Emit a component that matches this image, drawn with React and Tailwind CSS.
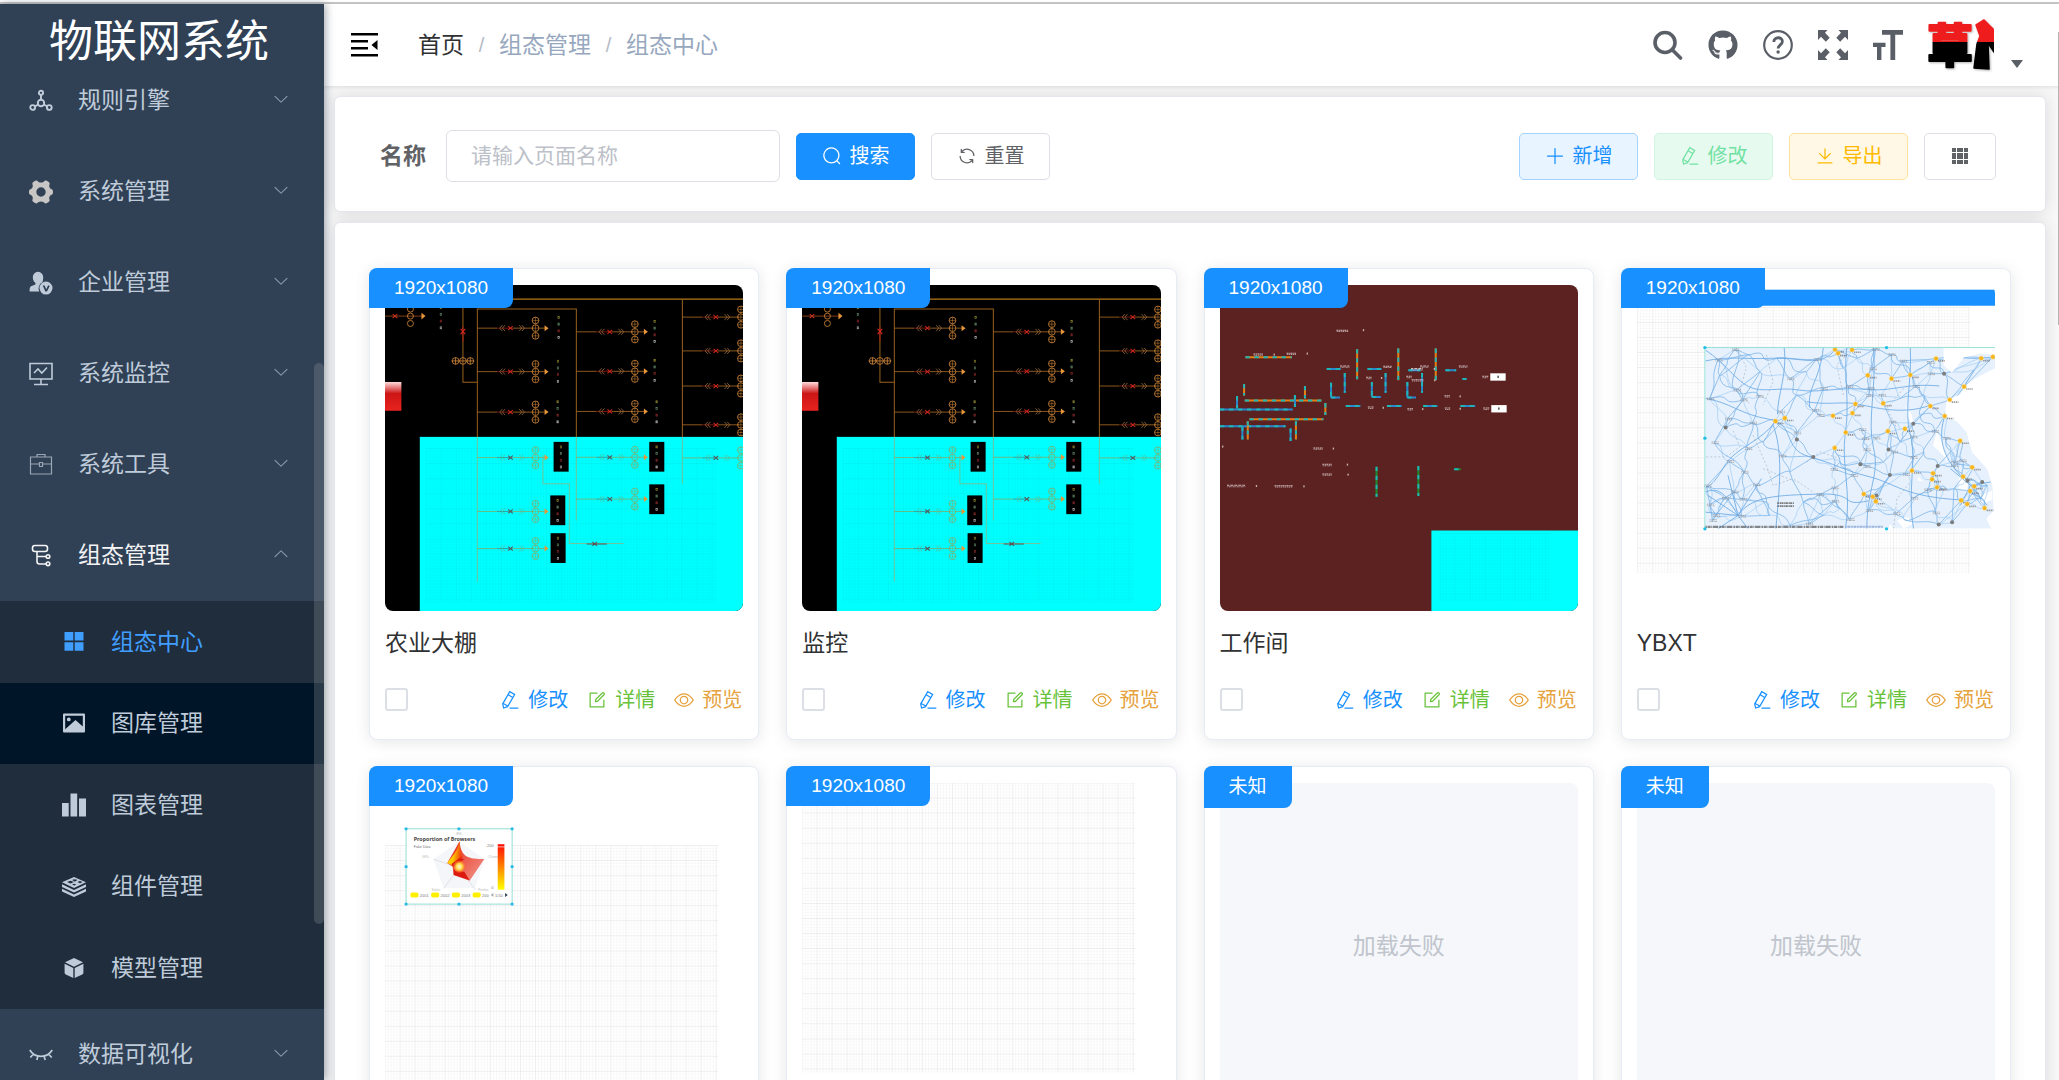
import React from "react";
import { FaGithub } from "react-icons/fa";

/* ---------- outline icons on a 1024 grid ---------- */
const PATHS = {
  search:
    "m795.904 750.72 124.992 124.928a32 32 0 0 1-45.248 45.248L750.656 795.904a416 416 0 1 1 45.248-45.248zM480 832a352 352 0 1 0 0-704 352 352 0 0 0 0 704z",
  plus: "M480 480V128a32 32 0 0 1 64 0v352h352a32 32 0 1 1 0 64H544v352a32 32 0 1 1-64 0V544H128a32 32 0 0 1 0-64h352z",
  download:
    "M160 832h704a32 32 0 1 1 0 64H160a32 32 0 1 1 0-64zm384-253.696 236.288-236.352 45.248 45.248L508.8 704 192 387.2l45.248-45.248L480 584.704V128h64v450.304z",
  refresh:
    "M771.776 794.88A384 384 0 0 1 128 512h64a320 320 0 0 0 555.712 216.448H654.72a32 32 0 1 1 0-64h149.056a32 32 0 0 1 32 32v148.928a32 32 0 1 1-64 0v-50.56zM276.288 295.616h92.992a32 32 0 0 1 0 64H220.16a32 32 0 0 1-32-32V178.56a32 32 0 0 1 64 0v50.56A384 384 0 0 1 896.128 512h-64a320 320 0 0 0-555.776-216.384z",
  view: "M512 160c320 0 512 352 512 352S832 864 512 864 0 512 0 512s192-352 512-352zm0 64c-225.28 0-384.128 208.064-436.8 288 52.608 79.872 211.456 288 436.8 288 225.28 0 384.128-208.064 436.8-288-52.608-79.872-211.456-288-436.8-288zm0 64a224 224 0 1 1 0 448 224 224 0 0 1 0-448zm0 64a160.192 160.192 0 0 0-160 160c0 88.192 71.744 160 160 160s160-71.808 160-160-71.744-160-160-160z",
  edit: "M832 512a32 32 0 1 1 64 0v352a32 32 0 0 1-32 32H160a32 32 0 0 1-32-32V160a32 32 0 0 1 32-32h352a32 32 0 0 1 0 64H192v640h640V512zM469.952 554.24l52.8-7.552L847.104 222.4a32 32 0 1 0-45.248-45.248L477.44 501.44l-7.552 52.8zm422.4-422.4a96 96 0 0 1 0 135.808l-331.84 331.84a32 32 0 0 1-18.112 9.088L436.8 623.68a32 32 0 0 1-36.224-36.224l15.104-105.6a32 32 0 0 1 9.024-18.112l331.904-331.84a96 96 0 0 1 135.744 0z",
  pen: "m199.04 672.64 193.984 112 224-387.968-193.92-112-224 388.032zm-23.872 60.16 32.896 148.288 144.896-45.696L175.168 732.8zM455.04 229.248l193.92 112 56.704-98.112-193.984-112-56.64 98.112zM104.32 708.8l384-665.024 304.768 175.936L409.152 884.8h.064l-248.448 78.336L104.32 708.8zm384 254.272v-64h448v64h-448z",
  down: "M831.872 340.864 512 652.672 192.128 340.864a30.592 30.592 0 0 0-42.752 0 29.12 29.12 0 0 0 0 41.6L489.664 714.24a32 32 0 0 0 44.672 0l340.288-331.712a29.12 29.12 0 0 0 0-41.728 30.592 30.592 0 0 0-42.752 0z",
};

function Icon({ name, className = "size-5" }) {
  return (
    <svg viewBox="0 0 1024 1024" className={`shrink-0 ${className}`} fill="currentColor" fillRule="evenodd" aria-hidden="true">
      <path d={PATHS[name]} />
    </svg>
  );
}

function Svg({ children, className = "size-6", box = "0 0 24 24", ...rest }) {
  return (
    <svg viewBox={box} className={`shrink-0 ${className}`} fill="none" stroke="currentColor" strokeWidth="1.6" aria-hidden="true" {...rest}>
      {children}
    </svg>
  );
}

/* ---------- sidebar icons ---------- */
const NodesIcon = () => (
  <Svg strokeWidth="1.900">
    <circle cx="12" cy="3.800" r="2.100" />
    <circle cx="12" cy="14" r="3.200" />
    <circle cx="3.700" cy="18.500" r="2.400" />
    <circle cx="20.300" cy="18.500" r="2.400" />
    <path d="M12 6v5M9.200 15.500l-3.300 1.800M14.800 15.500l3.300 1.800" />
  </Svg>
);
const GearIcon = () => (
  <Svg className="size-6 text-[#c8c6c4]" fill="currentColor" stroke="none">
    <path
      fillRule="evenodd"
      d="M7.200.6C8.400.4 8.600 1.300 9.600 1.900 11 2.700 13 2.700 14.400 1.900c1-.6 1.200-1.500 2.400-1.300 1.400.3 3 1.300 3.700 2.400.6 1-.3 1.600-.3 2.800 0 1.700 1 3 2.400 3.400 1 .3 1.400 1.400 1.400 2.800s-.4 2.500-1.400 2.800c-1.400.4-2.400 1.700-2.400 3.400 0 1.200.9 1.800.3 2.800-.7 1.100-2.300 2.100-3.700 2.400-1.200.2-1.400-.7-2.400-1.300-1.400-.8-3.400-.8-4.800 0-1 .6-1.200 1.500-2.400 1.300-1.400-.3-3-1.300-3.700-2.400-.6-1 .3-1.600.3-2.800 0-1.700-1-3-2.400-3.400C.4 14.500 0 13.400 0 12s.4-2.500 1.400-2.800c1.400-.4 2.400-1.700 2.400-3.400 0-1.200-.9-1.800-.3-2.800C4.200 1.900 5.800.9 7.200.6zM12 7.300a4.700 4.700 0 1 0 0 9.400 4.700 4.700 0 0 0 0-9.400z"
    />
  </Svg>
);
const UserBadgeIcon = () => (
  <Svg stroke="none" fill="currentColor">
    <path d="M9 .8a5.200 5.200 0 0 0-5.200 5.400c0 2.400 1 4.600 2.600 5.600v1.600L2 15.200C.8 15.800.6 17.400.6 20.400h9.600a7 7 0 0 1 3.200-9.200c.5-1.100.8-3 .8-5A5.200 5.200 0 0 0 9 .8z" />
    <path fillRule="evenodd" d="M17 10.600a6.500 6.500 0 1 0 0 13 6.500 6.500 0 0 0 0-13zm-3.300 3.800h1.900l1.600 3.800 2-4 1.500.7-2.700 5.500h-1.700z" />
  </Svg>
);
const MonitorIcon = () => (
  <Svg>
    <path d="M1 1.500h22V17H1zM12 17v5M5 22.500h14M5 11l4-4 3.800 4L18 5.500" />
  </Svg>
);
const CaseIcon = () => (
  <Svg className="size-6 text-[#9aa6b4]" strokeWidth="1.2">
    <path d="M1.500 4h21v17h-21zM8 4V1.500h8V4M1.500 11h9M13.500 11h9M10.500 9.500h3v4h-3z" />
  </Svg>
);
const TreeIcon = () => (
  <Svg strokeWidth="1.600">
    <rect x="3.500" y="1.500" width="15" height="6" rx="2.400" />
    <path d="M8 7.500v10a2.500 2.500 0 0 0 2.500 2.500h6.800M8 12.500h9.300" />
    <circle cx="19" cy="12.500" r="1.800" />
    <circle cx="19" cy="19.800" r="1.800" />
  </Svg>
);
const FourIcon = () => (
  <Svg stroke="none" fill="currentColor">
    <path d="M2.500 2h8.800v8.500H2.500zM12.700 2h8.800v8.500h-8.800zM2.500 12.200h8.800v8.500H2.500zM12.700 12.200h8.800v8.500h-8.800z" />
  </Svg>
);
const PictureIcon = () => (
  <Svg stroke="none" fill="currentColor">
    <path fillRule="evenodd" d="M1 3.500A1 1 0 0 1 2 2.500h20a1 1 0 0 1 1 1v17a1 1 0 0 1-1 1H2a1 1 0 0 1-1-1zm2.200 1.200v13.600L13.500 9l7.300 6.500V4.700zM6.800 6.500a1.900 1.900 0 1 1 0 3.800 1.900 1.900 0 0 1 0-3.800z" />
  </Svg>
);
const BarsIcon = () => (
  <Svg stroke="none" fill="currentColor">
    <path d="M0 10h6.700v13.500H0zM8.500.5h6.700v23H8.500zM17 5.500h7v18h-7z" />
  </Svg>
);
const LayersIcon = () => (
  <Svg stroke="none" fill="currentColor">
    <path fillRule="evenodd" d="M12 2 24 7.200 12 13 0 7.200zm-1.500 2.200 1 1-1.300.8 2 .1.700.9.700-.9 1.800-.1-1.200-.8.500-1-1.800.4zM5 7l3.500 1.500L12 7 8.500 5.800zm10.500 0 2.500 1.200L20.500 7l-2.500-1zM10 9.500l2.300 1 2-1-2.200-.8z" />
    <path d="M0 9.200 12 15l12-5.800V12l-12 5.600L0 12zM0 13.800l12 5.600 12-5.600v2.700L12 22 0 16.500z" />
  </Svg>
);
const CubeIcon = () => (
  <Svg stroke="none" fill="currentColor">
    <path d="M12 2l9 4.300-9 4.400-9-4.400zM2.600 7.800l8.700 4.300v10L3.800 18.600a2 2 0 0 1-1.200-1.800zM21.400 7.800l-8.700 4.300v10l7.500-3.500a2 2 0 0 0 1.200-1.800z" />
  </Svg>
);
const LashIcon = () => (
  <Svg strokeWidth="1.700">
    <path d="M.8 7c2.500 4.200 6.400 6.300 11.200 6.300S20.700 11.200 23.200 7M4.500 11 1.300 14.500M9 13l-1.200 4M15 13l1.200 4M19.500 11l3.200 3.500" />
  </Svg>
);

const MENU = [
  { label: "规则引擎", icon: NodesIcon },
  { label: "系统管理", icon: GearIcon },
  { label: "企业管理", icon: UserBadgeIcon },
  { label: "系统监控", icon: MonitorIcon },
  { label: "系统工具", icon: CaseIcon },
  {
    label: "组态管理",
    icon: TreeIcon,
    children: [
      { label: "组态中心", icon: FourIcon, style: "text-[#409eff]" },
      { label: "图库管理", icon: PictureIcon, style: "bg-[#001528]" },
      { label: "图表管理", icon: BarsIcon, style: "" },
      { label: "组件管理", icon: LayersIcon, style: "" },
      { label: "模型管理", icon: CubeIcon, style: "" },
    ],
  },
  { label: "数据可视化", icon: LashIcon },
];

function Sidebar() {
  return (
    <aside className="relative z-10 flex w-[324px] shrink-0 flex-col bg-[#304156] text-[#bfcbd9] shadow-[2px_0_8px_rgba(0,21,41,0.35)]">
      <h1 className="z-10 flex h-[72px] shrink-0 items-center justify-center pt-1 pr-1.5 text-[44px] text-white">物联网系统</h1>
      <nav className="-mt-[21px] min-h-0 flex-1 overflow-hidden">
        <ul>
          {MENU.map(({ label, icon: ItemIcon, children }) => (
            <li key={label}>
              <button
                type="button"
                aria-expanded={Boolean(children)}
                className={`flex h-[91px] w-full items-center pr-[34px] pl-[29px] text-[23px] ${children ? "text-[#f4f4f5]" : ""}`}
              >
                <ItemIcon />
                <span className="ml-[25px] flex-1 text-left">{label}</span>
                <Icon name="down" className={`mb-1 size-[18px] text-[#8d9aab] ${children ? "rotate-180" : ""}`} />
              </button>
              {children && (
                <ul className="grid h-[408px] grid-rows-5 bg-[#1f2d3d]">
                  {children.map(({ label: sub, icon: SubIcon, style }) => (
                    <li key={sub} className="flex">
                      <a href="#" className={`flex flex-1 items-center gap-[25px] pl-[62px] text-[23px] ${style}`}>
                        <SubIcon />
                        {sub}
                      </a>
                    </li>
                  ))}
                </ul>
              )}
            </li>
          ))}
        </ul>
      </nav>
      <div className="absolute top-[359px] right-0 h-[561px] w-[10px] rounded-full bg-[#909399]/30" />
    </aside>
  );
}

/* ---------- top bar ---------- */
function Avatar() {
  return (
    <svg viewBox="0 0 66 58" className="h-[58px] w-[66px] shrink-0" aria-label="用户头像" role="img">
      <defs>
        <linearGradient id="ink" gradientUnits="userSpaceOnUse" x1="0" y1="0" x2="0" y2="58">
          <stop offset="0.45" stopColor="#ee1c1c" />
          <stop offset="0.45" stopColor="#000000" />
        </linearGradient>
        <filter id="drop" x="-10%" y="-10%" width="120%" height="130%">
          <feDropShadow dx="1" dy="1" stdDeviation="1" floodOpacity="0.3" />
        </filter>
      </defs>
      <g fill="url(#ink)" stroke="url(#ink)" strokeLinejoin="round" filter="url(#drop)">
        <text x="-1" y="46" fontSize="46" strokeWidth="2" fontFamily='"Noto Sans CJK SC", sans-serif' fontWeight="900">草</text>
        <path strokeWidth="1.500" d="M48 9l8-5 10 10v22l-6-9 1 26-15-1 3-24 3-8z" />
      </g>
    </svg>
  );
}

function TopBar() {
  const crumbs = ["首页", "组态管理", "组态中心"];
  return (
    <header className="relative flex h-[82px] shrink-0 items-center bg-white pr-[35px] pl-[27px] shadow-[0_1px_4px_rgba(0,21,41,0.12)]">
      <button type="button" aria-label="收起菜单" className="text-black">
        <Svg className="size-[27px]" box="0 0 27 27" stroke="none" fill="currentColor">
          <path d="M0 1h27v2.500H0zM0 8h17v2.500H0zM0 15h17v2.500H0zM0 22h27v2.500H0zM26.500 8v10L20.500 13z" />
        </Svg>
      </button>
      <nav aria-label="面包屑" className="ml-10 flex-1">
        <ol className="flex text-[23px] text-[#97a8be]">
          {crumbs.map((c, i) => (
            <li key={c} className="flex">
              {i > 0 && <span className="w-[35px] text-center text-[20px] leading-[34px] text-[#b4bac4]">/</span>}
              <a href="#" className={i === 0 ? "text-[#303133]" : ""}>{c}</a>
            </li>
          ))}
        </ol>
      </nav>
      <div className="flex items-center gap-[25px] text-[#5a5e66]">
        <button type="button" aria-label="搜索菜单">
          <Svg className="size-[30px]" box="0 0 30 30" strokeWidth="3.600" strokeLinecap="round">
            <circle cx="12" cy="12.500" r="10" />
            <path d="M19.500 20l8 8" />
          </Svg>
        </button>
        <a href="#" aria-label="源码地址"><FaGithub className="size-[30px]" /></a>
        <a href="#" aria-label="帮助文档">
          <Svg className="size-[30px]" box="0 0 30 30" strokeWidth="2.200">
            <circle cx="15" cy="15" r="13.800" />
            <path strokeWidth="2.800" d="M10.800 12c0-5.600 8.600-5.600 8.600-.5 0 3.200-4.300 3.600-4.300 7" />
            <circle cx="15.100" cy="22" r="1.700" fill="currentColor" stroke="none" />
          </Svg>
        </a>
        <button type="button" aria-label="全屏">
          <Svg className="size-[30px]" box="0 0 30 30" stroke="none" fill="currentColor">
            <path id="corner" d="M0 0h9.500L7 2.800l4.700 4.900-3.900 4L3 6.800 0 10z" />
            <use href="#corner" transform="matrix(-1 0 0 1 30 0)" />
            <use href="#corner" transform="matrix(1 0 0 -1 0 30)" />
            <use href="#corner" transform="matrix(-1 0 0 -1 30 30)" />
          </Svg>
        </button>
        <button type="button" aria-label="布局大小">
          <Svg className="size-[30px]" box="0 0 30 30" stroke="none" fill="currentColor">
            <path d="M9 0h21v4.800h-7.800V30h-4.800V4.800H9zM0 12.800h12.500v4.200H8.400v13H4V17H0z" />
          </Svg>
        </button>
        <button type="button" aria-label="用户菜单" className="flex items-end gap-4">
          <Avatar />
          <Svg className="h-[18px] w-[14px]" box="0 0 14 18" stroke="none" fill="currentColor">
            <path d="M1 4h12L7 12z" />
          </Svg>
        </button>
      </div>
    </header>
  );
}

/* ---------- search bar ---------- */
function Btn({ icon, children, className }) {
  return (
    <button type="button" className={`flex h-[47px] w-[119px] items-center justify-center gap-2 rounded-[5px] border text-[20px] ${className}`}>
      {icon && <Icon name={icon} />}
      {children}
    </button>
  );
}

const PANEL = "rounded-md border border-[#e4e7ed] bg-white shadow-[0_0_16px_rgba(0,0,0,0.12)]";

function SearchPanel() {
  return (
    <section className={`flex h-[116px] shrink-0 items-center pt-1 pr-[49px] pl-[45px] ${PANEL}`}>
      <label htmlFor="page-name" className="text-[23px] font-bold text-[#606266]">名称</label>
      <input
        id="page-name"
        type="text"
        placeholder="请输入页面名称"
        className="ml-5 h-[52px] w-[334px] rounded-md border border-[#dcdfe6] px-6 text-[21px] outline-none placeholder:text-[#bcc0c8]"
      />
      <div className="ml-4 flex flex-1 gap-4">
        <Btn icon="search" className="border-[#1890ff] bg-[#1890ff] text-white">搜索</Btn>
        <Btn icon="refresh" className="border-[#dcdfe6] bg-white text-[#606266]">重置</Btn>
      </div>
      <div className="flex gap-4">
        <Btn icon="plus" className="border-[#a3d3ff] bg-[#e8f4ff] text-[#1890ff]">新增</Btn>
        <Btn icon="pen" className="border-[#d0f5e0] bg-[#e7faf0] text-[#71e2a3]">修改</Btn>
        <Btn icon="download" className="border-[#ffe399] bg-[#fff8e6] text-[#ffba00]">导出</Btn>
        <button type="button" aria-label="切换视图" className="flex h-[47px] w-[72px] items-center justify-center rounded-[5px] border border-[#dcdfe6] text-[#606266]">
          <Svg className="size-4" box="0 0 16 16" stroke="none" fill="currentColor">
            <path d="M0 0h4v4H0zM5 0h6v4H5zM12 0h4v4h-4zM0 5h4v6H0zM5 5h6v6H5zM12 5h4v6h-4zM0 12h4v4H0zM5 12h6v4H5zM12 12h4v4h-4z" />
          </Svg>
        </button>
      </div>
    </section>
  );
}

/* ---------- thumbnails ---------- */
function Thumb({ box, children }) {
  return (
    <svg viewBox={box} preserveAspectRatio="xMinYMin slice" className="block h-full w-full" aria-hidden="true">
      {children}
    </svg>
  );
}

function GridLines({ x, y, w, h, color = "#000000" }) {
  const cols = [];
  for (let i = 0; i * 9 <= w; i++) cols.push(i);
  const rows = [];
  for (let i = 0; i * 9 <= h; i++) rows.push(i);
  return (
    <g stroke={color}>
      {cols.map((i) => (
        <line key={`c${i}`} x1={x + i * 9} x2={x + i * 9} y1={y} y2={y + h} strokeWidth="3" opacity={i % 5 === 0 ? 0.055 : 0.022} />
      ))}
      {rows.map((i) => (
        <line key={`r${i}`} y1={y + i * 9} y2={y + i * 9} x1={x} x2={x + w} strokeWidth="3" opacity={i % 5 === 0 ? 0.055 : 0.012} />
      ))}
    </g>
  );
}

function Digits({ x, y, gap = 20 }) {
  return (
    <g fill="none" strokeWidth="2">
      {["#8f8830", "#5f8868", "#8a2626", "#b8b8b8"].map((c, i) => (
        <rect key={c} x={x - 2} y={y + i * gap - 3} width="4" height="6" stroke={c} />
      ))}
    </g>
  );
}

function Feeder({ x0, x, y, lit = true, tail = true }) {
  const wire = lit ? "#a86824" : "#7fae6c";
  const coil = lit ? "#d08638" : "#7fae6c";
  return (
    <g fill="none" strokeWidth="2.500" stroke={wire}>
      <path d={`M${x0} ${y}H${x + 60}M${x + 106} ${y}H${x + 170}`} />
      <path d={`M${x + 60} ${y}H${x + 106}`} stroke={lit ? "#8e1b12" : "#3d8a8a"} />
      <path
        d={`M${x + 78} ${y - 9}l-9 9 9 9M${x + 86} ${y - 9}l-9 9 9 9`}
        stroke="none"
      />
      <path
        d={`M${x + 76} ${y - 9}l-8 9 8 9M${x + 84} ${y - 9}l-8 9 8 9M${x + 126} ${y - 9}l8 9-8 9M${x + 134} ${y - 9}l8 9-8 9`}
        stroke={lit ? "#96683a" : "#4cc4a4"}
      />
      <path d={`M${x + 93} ${y - 6}l14 12M${x + 107} ${y - 6}l-14 12`} stroke={lit ? "#d0281c" : "#5c5050"} strokeWidth="3" />
      {[-23, 0, 23].map((d) => (
        <g key={d} stroke={coil}>
          <circle cx={x + 175} cy={y + d} r="10" />
          <path d={`M${x + 165} ${y + d}h20M${x + 175} ${y + d - 10}v20`} strokeWidth="1.500" />
        </g>
      ))}
      {tail && (
        <g>
          <path d={`M${x + 185} ${y}h18`} />
          <path d={`M${x + 202} ${y - 9}l12 9-12 9z`} fill="#e8963a" stroke="none" />
        </g>
      )}
    </g>
  );
}

function Schematic() {
  return (
    <Thumb box="77 91 1071 978">
      <rect x="77" y="91" width="1200" height="1000" fill="#000000" />
      <rect x="181" y="545" width="1100" height="540" fill="#00ffff" />
      <GridLines x={200} y={580} w={870} h={460} color="#006a6a" />
      <defs>
        <linearGradient id="lamp" x1="0" y1="0" x2="0" y2="1">
          <stop offset="0" stopColor="#ffdada" />
          <stop offset="0.4" stopColor="#cc1616" />
          <stop offset="1" stopColor="#e8231f" />
        </linearGradient>
      </defs>
      <rect x="77" y="381" width="49" height="86" fill="url(#lamp)" />
      <g fill="none" stroke="#9a621e" strokeWidth="3">
        <path d="M440 133H1200" strokeWidth="3.500" stroke="#b87818" />
        <path d="M353 545V163H649V545M310 91V382H353M966 133V545" />
        <path d="M353 545V978M649 545V795M966 545V685M549 600V685H628V864H790" stroke="#6fc49a" />
      </g>
      <path d="M310 215v45" stroke="#b01c12" strokeWidth="3" />
      <path d="M303 222l14 16M317 222l-14 16M100 178l14 12M114 178l-14 12" stroke="#e02a1c" strokeWidth="3" />
      <path d="M77 184H190" stroke="#9a4a1c" strokeWidth="2.500" />
      <path d="M186 174l12 10-12 10z" fill="#e8963a" />
      <g fill="none" stroke="#d08638" strokeWidth="2.500">
        <circle cx="153" cy="163" r="9" />
        <circle cx="153" cy="184" r="9" />
        <circle cx="153" cy="206" r="9" />
        <circle cx="288" cy="318" r="10" />
        <circle cx="310" cy="318" r="10" />
        <circle cx="332" cy="318" r="10" />
        <path d="M276 318h68M288 308v20M332 308v20" />
      </g>
      <Digits x={244} y={159} />
      {[220, 350, 471].map((y) => <Feeder key={y} x0={353} x={352} y={y} />)}
      {[231, 349, 469].map((y) => <Feeder key={y} x0={649} x={649} y={y} />)}
      {[187, 288, 393, 509].map((y) => <Feeder key={y} x0={966} x={966} y={y} />)}
      {[607, 768, 879].map((y) => <Feeder key={y} x0={353} x={352} y={y} lit={false} />)}
      {[606, 731].map((y) => <Feeder key={y} x0={649} x={649} y={y} lit={false} />)}
      <Feeder x0={966} x={966} y={608} lit={false} />
      <path d="M697 859l14 12M711 859l-14 12M680 865h60" stroke="#5c5050" strokeWidth="3" />
      <Digits x={596} y={188} />
      <Digits x={594} y={319} />
      <Digits x={593} y={440} />
      <Digits x={883} y={200} />
      <Digits x={883} y={316} />
      <Digits x={889} y={440} />
      {[[603, 604], [889, 604], [593, 764], [889, 731], [594, 877]].map(([x, y]) => (
        <g key={`${x}-${y}`}>
          <rect x={x - 22} y={y - 44} width="45" height="89" fill="#000000" />
          <Digits x={x} y={y - 29} />
        </g>
      ))}
    </Thumb>
  );
}

function Workshop() {
  const pipes = [
    ["o", 153, 307, 292, 307], ["o", 151, 436, 380, 436], ["b", 77, 463, 294, 463], ["o", 165, 492, 386, 492],
    ["b", 77, 513, 273, 513], ["o", 149, 387, 149, 421], ["b", 128, 423, 128, 460], ["o", 331, 393, 331, 430],
    ["b", 301, 420, 301, 456], ["o", 392, 444, 392, 480], ["b", 144, 515, 144, 553], ["o", 160, 498, 160, 553],
    ["b", 288, 520, 288, 557], ["o", 304, 498, 304, 553], ["o", 487, 283, 487, 373], ["o", 610, 281, 610, 376],
    ["o", 722, 281, 722, 376], ["b", 396, 342, 438, 342], ["b", 518, 342, 560, 342], ["b", 640, 346, 676, 346],
    ["b", 751, 346, 783, 346], ["b", 450, 354, 450, 413], ["b", 572, 354, 572, 413], ["b", 681, 354, 681, 413],
    ["b", 409, 383, 409, 428], ["b", 409, 427, 436, 427], ["b", 531, 381, 531, 426], ["b", 531, 426, 558, 426],
    ["b", 637, 381, 637, 428], ["b", 637, 427, 663, 427], ["b", 453, 453, 497, 453], ["b", 576, 453, 620, 453],
    ["b", 684, 453, 727, 453], ["b", 796, 453, 840, 453], ["b", 802, 372, 814, 372], ["g", 545, 634, 545, 724],
    ["g", 670, 632, 670, 722], ["g", 777, 642, 797, 642],
  ];
  const base = { o: "#e87f14", b: "#2a86cf", g: "#1f8a2c" };
  const labels = [
    [425, 228, 36], [177, 299, 28], [276, 297, 28], [436, 335, 28], [565, 336, 26], [675, 335, 26], [791, 335, 26],
    [648, 343, 36], [514, 369, 16], [634, 366, 16], [650, 376, 36], [748, 424, 16], [519, 458, 17], [637, 463, 17],
    [749, 461, 16], [861, 366, 18], [864, 461, 18], [356, 580, 28], [383, 629, 28], [383, 658, 28], [98, 692, 55], [240, 693, 55],
  ];
  const dots = [[506, 226], [239, 299], [338, 296], [560, 369], [795, 424], [565, 458], [683, 462], [795, 461], [718, 342], [719, 376], [85, 574], [416, 580], [458, 628], [460, 658], [186, 692], [328, 693]];
  return (
    <Thumb box="77 91 1071 978">
      <rect x="77" y="91" width="1200" height="1000" fill="#5c2121" />
      <rect x="709" y="825" width="600" height="260" fill="#00ffff" />
      <GridLines x={735} y={835} w={330} h={200} color="#006a6a" />
      {pipes.map(([k, ...p]) => (
        <g key={p.join()} strokeWidth="6">
          <line x1={p[0]} y1={p[1]} x2={p[2]} y2={p[3]} stroke={base[k]} />
          <line x1={p[0]} y1={p[1]} x2={p[2]} y2={p[3]} stroke="#1fb5b5" strokeDasharray="13 14" />
        </g>
      ))}
      {labels.map(([x, y, w]) => (
        <g key={`${x}-${y}`} stroke="#e6dada" opacity="0.85">
          <line x1={x} x2={x + w} y1={y - 2} y2={y - 2} strokeWidth="3" strokeDasharray="6 2 3 1" />
          <line x1={x + 1} x2={x + w} y1={y + 2} y2={y + 2} strokeWidth="3" strokeDasharray="3 2 5 2" opacity="0.8" />
        </g>
      ))}
      {dots.map(([x, y]) => <rect key={`${x}-${y}`} x={x - 2} y={y - 3} width="4" height="6" fill="#c8b0b0" />)}
      <rect x="885" y="355" width="46" height="22" fill="#ffffff" />
      <rect x="888" y="450" width="46" height="22" fill="#ffffff" />
      <rect x="906" y="362" width="5" height="7" fill="#666666" />
      <rect x="908" y="457" width="5" height="7" fill="#666666" />
    </Thumb>
  );
}

const MAJOR = [
  [675, 284], [684, 295], [726, 285], [977, 311], [1112, 310], [1147, 306], [773, 361], [844, 371], [900, 360], [1061, 395],
  [1018, 434], [960, 453], [1003, 483], [736, 447], [727, 474], [819, 445], [669, 482], [497, 498], [525, 489], [707, 532],
  [833, 528], [884, 521], [1049, 557], [674, 578], [905, 646], [968, 654], [965, 672], [980, 696], [1085, 636], [1058, 664],
  [1091, 693], [1079, 707], [761, 716], [788, 724], [797, 738], [1052, 735], [1070, 746], [1122, 758],
];
const MINOR = [[348, 517], [561, 553], [610, 605], [751, 627], [839, 659], [835, 583], [909, 506], [1001, 356], [982, 632], [1071, 676], [1115, 680], [985, 807], [1025, 800], [799, 720]];
const TOWNS = [
  [375, 284], [325, 315], [620, 313], [540, 371], [380, 405], [400, 434], [448, 423], [300, 431], [354, 491], [428, 503],
  [512, 470], [614, 465], [640, 400], [716, 394], [786, 341], [795, 283], [843, 299], [877, 318], [958, 322], [960, 356],
  [915, 394], [780, 400], [776, 421], [814, 420], [314, 562], [414, 580], [516, 602], [560, 533], [360, 618], [403, 650],
  [438, 688], [373, 709], [345, 728], [398, 731], [395, 782], [300, 748], [318, 780], [292, 691], [628, 717], [670, 642],
  [730, 660], [672, 697], [674, 737], [720, 792], [775, 765], [857, 774], [910, 728], [975, 772], [886, 657], [908, 606],
  [850, 590], [768, 583], [764, 550], [797, 548], [755, 523], [845, 500], [908, 545], [972, 528], [1007, 549], [1055, 616],
  [1030, 631], [950, 703], [997, 701], [768, 633], [630, 480], [596, 805], [308, 795], [1030, 620],
];
/* junctions that carry roads but no label */
const JUNCTIONS = [
  [450, 350], [460, 560], [540, 650], [580, 740], [480, 780], [330, 360], [560, 420], [1090, 345], [1130, 690], [1110, 730],
  [940, 420], [470, 740], [590, 350], [700, 340], [870, 430], [690, 620], [820, 620], [820, 690], [880, 790], [940, 590],
  [1020, 590], [930, 480], [1030, 700], [640, 780], [540, 810], [420, 300], [500, 310], [690, 760], [740, 310], [870, 560],
];
const LAND = "M287 278H1000V330L1024 353 1060 308 1110 295 1155 300V340L1110 362 1073 385 1050 418 1010 435 1003 478 1040 500 1068 530 1085 590 1130 640 1146 690 1150 765 1128 790 1142 820H850L838 805 836 820H287z";

function roads() {
  const all = [...MAJOR, ...MINOR, ...TOWNS, ...JUNCTIONS];
  const out = [];
  const seen = new Set();
  all.forEach(([x, y], i) => {
    const near = all
      .map(([a, b], j) => ({ j, d: Math.hypot(a - x, b - y) }))
      .filter(({ j, d }) => j !== i && d > 12)
      .sort((p, q) => p.d - q.d)
      .slice(0, 5);
    near.forEach(({ j, d }, k) => {
      const key = i < j ? `${i}-${j}` : `${j}-${i}`;
      if (seen.has(key)) return;
      seen.add(key);
      const [a, b] = all[j];
      const bend = (((i * 37 + j * 53) % 21) - 10) * 0.02 * d;
      const mx = (x + a) / 2;
      const my = (y + b) / 2;
      out.push({
        key,
        d: `M${x} ${y}Q${Math.round((x + mx) / 2 + bend)} ${Math.round((y + my) / 2 - bend)} ${Math.round(mx)} ${Math.round(my)}T${a} ${b}`,
        strong: k % 2 === 0,
      });
    });
  });
  return out;
}
const ROADS = roads();

function RoadMap() {
  const anchors = [[286, 278], [829, 278], [286, 549], [286, 820], [829, 820]];
  return (
    <Thumb box="83 91 1071 978">
      <rect x="83" y="91" width="1200" height="1000" fill="#ffffff" />
      <GridLines x={85} y={158} w={993} h={795} />
      <rect x="83" y="105" width="1200" height="48" fill="#1890ff" />
      <rect x="287" y="278" width="900" height="543" fill="#ffffff" />
      <clipPath id="land"><path d={LAND} /></clipPath>
      <g clipPath="url(#land)" fill="none">
        <path d={LAND} fill="#e6f1fd" />
        <path d="M980 530l18 40 14 50-14-20-30-30zM885 450l20 30 5 40-16-34zM1045 665l30 10-6 30-24-6zM1105 720l40-14v28l-36 10zM925 665l14 14-18-4zM860 795l30-10 20 20-30 14z" fill="#ffffff" />
        <path d="M380 278l30 60-20 70 30 40M470 300l20 80-30 70M430 540l40 90 20 60 60-20 60 40M290 605h60l40-30-20-50M460 640l100 40M700 420l-20-90 50-50M590 620l40-30 60 20M850 820l10-90 40-50M880 400l-50 60 30 60" stroke="#a8b4c0" strokeWidth="2" strokeDasharray="6 6" />
        {ROADS.map((r) => <path key={r.key} d={r.d} stroke={r.strong ? "#84b8ea" : "#a0ccf4"} strokeWidth={r.strong ? 2.5 : 2} />)}
        <g stroke="#6aa9e4" strokeWidth="2.500">
          <path d="M287 318c80-16 110-4 200-8s140 30 190-26M287 285c60 40 90 90 130 110s90 0 150 10 120-10 200-2 120-20 220-10" />
          <path d="M287 430c70 10 110 50 190 62s40 90 120 112 100 40 180 60 100 60 280 70" />
          <path d="M523 278c10 80-20 140-20 200M590 440c60 10 100 0 140 5s140 40 230 5M900 278c6 90-20 190 0 260s-10 180 10 282" />
          <path d="M497 498c-40 60-120 80-150 130s-40 60-60 70M490 510c30 80 20 180 8 310M385 780c-30-50-50-90-98-70M385 780c40-60 120-60 240-64s60 40 150 20" />
          <path d="M710 278c-10 90 10 160-4 254s20 180 0 288M790 278c10 120-20 220 0 300s-20 120-20 242M640 278c-10 100-50 120-40 180M1003 483c-20 60-10 120 50 180" />
          <path d="M385 780l-90-60M385 780l-30-120M385 780l30 40M385 780l-60 40M385 780l70-110M385 780l-98-10M1080 690l-60-50M1080 690l50 60M1080 690l-30 60M1080 690l60-10" />
        </g>
      </g>
      {TOWNS.map(([x, y]) => (
        <g key={`${x}-${y}`} stroke="#8d8480" opacity="0.75">
          <line x1={x - 8} x2={x + 14} y1={y - 2} y2={y - 2} strokeWidth="2.500" strokeDasharray="5 2 3 1" />
          <line x1={x - 8} x2={x + 14} y1={y + 3} y2={y + 3} strokeWidth="2.500" strokeDasharray="3 2 6 1" />
        </g>
      ))}
      {MAJOR.map(([x, y]) => <line key={`n${x}-${y}`} x1={x + 6} x2={x + 26} y1={y + 7} y2={y + 7} stroke="#5f5854" strokeWidth="5" strokeDasharray="4 2" opacity="0.6" />)}
      {MINOR.map(([x, y]) => <circle key={`${x}-${y}`} cx={x} cy={y} r="6" fill="#7c7c7c" />)}
      {MAJOR.map(([x, y]) => <circle key={`${x}-${y}`} cx={x} cy={y} r="7" fill="#f7b51c" stroke="#fde7b0" strokeWidth="1.500" />)}
      <path d="M287 814H700" stroke="#4d4d4d" strokeWidth="7" strokeDasharray="5 2 9 2 3 2 16 3" opacity="0.65" />
      <path d="M705 814H820" stroke="#9cb4dc" strokeWidth="6" strokeDasharray="5 2 9 2" />
      <path d="M502 743h50M502 752h50" stroke="#7a7a7a" strokeWidth="5" strokeDasharray="6 2 4 1" />
      <path d="M286 820V278H1200" fill="none" stroke="#7fdcd0" strokeWidth="2.500" />
      {anchors.map(([x, y]) => <circle key={`${x}-${y}`} cx={x} cy={y} r="5" fill="#1fc0e8" />)}
    </Thumb>
  );
}

function RadarPage() {
  const anchors = [[140, 221], [298, 221], [457, 221], [140, 334], [457, 334], [140, 446], [298, 446], [457, 446]];
  return (
    <Thumb box="77 84 1071 978">
      <rect x="77" y="84" width="1200" height="1000" fill="#ffffff" />
      <GridLines x={77} y={271} w={996} h={791} />
      <defs>
        <linearGradient id="heat" x1="0" y1="0" x2="0" y2="1">
          <stop offset="0" stopColor="#ff0a00" />
          <stop offset="1" stopColor="#ffff00" />
        </linearGradient>
        <linearGradient id="spike" x1="0" y1="0" x2="1" y2="0.2">
          <stop offset="0" stopColor="#ffe000" />
          <stop offset="0.5" stopColor="#ffc400" />
          <stop offset="1" stopColor="#f03010" />
        </linearGradient>
        <linearGradient id="wing" x1="0" y1="0" x2="1" y2="1">
          <stop offset="0" stopColor="#e8240f" />
          <stop offset="1" stopColor="#f29a90" />
        </linearGradient>
        <radialGradient id="core">
          <stop offset="0" stopColor="#fffbe0" />
          <stop offset="0.5" stopColor="#ffd640" />
          <stop offset="1" stopColor="#ff5a20" stopOpacity="0.3" />
        </radialGradient>
      </defs>
      <rect x="140" y="221" width="317" height="225" fill="#ffffff" stroke="#7fd8cc" strokeWidth="2.500" />
      <path d="M298 258l76 54-28 86H252l-30-86z" fill="#f5f6f9" />
      <path d="M298 337v-75M298 337l76-25M298 337l50 68M298 337l-45 62M298 337l-76-25" stroke="#c8c8ce" strokeWidth="1.500" />
      <path d="M300 258C304 300 318 312 374 311L330 376 283 360 279 334 263 323z" fill="url(#wing)" />
      <path d="M282 338l0 20 48 17-16-26-26-2z" fill="#dc1a10" />
      <path d="M300 258C302 290 303 300 310 306L279 330 263 323C280 300 294 290 300 258z" fill="url(#spike)" />
      <path d="M276 326l24-18 14 4-32 24z" fill="#dc1a10" />
      <circle cx="299" cy="334" r="19" fill="url(#core)" />
      <g fontFamily='"Liberation Sans", sans-serif' fill="#777777" fontSize="13">
        <text x="163" y="256" fontFamily='"Noto Sans", sans-serif' fontSize="16" fontWeight="700" fill="#444444">Proportion of Browsers</text>
        <text x="163" y="278" fontSize="11">Fake Data</text>
        <text x="289" y="239" fontSize="11" fill="#bbbbbb">IE8-</text>
        <text x="188" y="309" fontSize="11" fill="#bbbbbb">IE9+</text>
        <text x="386" y="309" fontSize="9" fill="#bbbbbb">Chrome</text>
        <text x="216" y="408" fontSize="10" fill="#bbbbbb">Safari</text>
        <text x="356" y="408" fontSize="10" fill="#bbbbbb">Firefox</text>
        <text x="382" y="275" fontSize="12">200</text>
        <text x="395" y="402" fontSize="12">0</text>
        {[["2001", 153], ["2002", 215], ["2003", 277], ["200", 339]].map(([t, x]) => (
          <g key={t}>
            <rect x={x} y="411" width="24" height="15" rx="5" fill="#fff000" />
            <text x={x + 28} y="424" fontSize="12">{t}</text>
          </g>
        ))}
        <text x="406" y="424" fontSize="12">1/10</text>
      </g>
      <path d="M401 413v12l-8-6z" fill="#aaaaaa" />
      <path d="M436 413v12l8-6z" fill="#2f4554" />
      <rect x="414" y="267" width="20" height="136" fill="url(#heat)" />
      <path d="M412 275h24" stroke="#ffffff" strokeWidth="2" />
      {anchors.map(([x, y]) => <circle key={`${x}-${y}`} cx={x} cy={y} r="5" fill="#2bbbe4" />)}
    </Thumb>
  );
}

function BlankPage() {
  return (
    <Thumb box="77 84 1071 978">
      <rect x="77" y="84" width="1200" height="1000" fill="#ffffff" />
      <GridLines x={77} y={84} w={996} h={864} />
    </Thumb>
  );
}

function LoadFailed() {
  return <div className="flex h-full items-center justify-center bg-[#f5f7fa] text-[23px] text-[#c0c4cc]">加载失败</div>;
}

/* ---------- cards ---------- */
const CARDS = [
  { id: 1, size: "1920x1080", name: "农业大棚", thumb: Schematic },
  { id: 2, size: "1920x1080", name: "监控", thumb: Schematic },
  { id: 3, size: "1920x1080", name: "工作间", thumb: Workshop },
  { id: 4, size: "1920x1080", name: "YBXT", thumb: RoadMap },
  { id: 5, size: "1920x1080", name: "图表", thumb: RadarPage },
  { id: 6, size: "1920x1080", name: "空白页", thumb: BlankPage },
  { id: 7, size: "未知", name: "未命名", thumb: LoadFailed },
  { id: 8, size: "未知", name: "未命名", thumb: LoadFailed },
];

function Action({ icon, label, className }) {
  return (
    <button type="button" className={`flex items-center gap-2 ${className}`}>
      <Icon name={icon} />
      {label}
    </button>
  );
}

function Card({ card }) {
  const Picture = card.thumb;
  return (
    <article className="relative rounded-lg border border-[#e6ebf5] bg-white px-[15px] pt-4 pb-6 shadow-[0_2px_16px_rgba(0,0,0,0.1)]">
      <div className="h-[326px] overflow-hidden rounded-lg">
        <Picture />
      </div>
      <span
        className={`absolute -top-px -left-px rounded-tl-lg rounded-br-lg bg-[#1890ff] px-[25px] text-white ${
          card.size === "未知" ? "text-[19px] leading-[42px]" : "text-[19px] leading-10"
        }`}
      >
        {card.size}
      </span>
      <h2 className="mt-4 text-[23px] leading-8 text-[#303133]">{card.name}</h2>
      <div className="mt-6 flex h-8 items-center justify-between text-[20px]">
        <input
          type="checkbox"
          aria-label={`选择${card.name}`}
          className="size-[23px] appearance-none rounded-[3px] border-2 border-[#dcdfe6] bg-white"
        />
        <div className="flex gap-[19px] pt-0.5 pr-px">
          <Action icon="pen" label="修改" className="text-[#1890ff]" />
          <Action icon="edit" label="详情" className="text-[#67c23a]" />
          <Action icon="view" label="预览" className="text-[#e6a23c]" />
        </div>
      </div>
    </article>
  );
}

export default function App() {
  return (
    <div className="flex h-screen flex-col overflow-hidden bg-white font-['Liberation_Sans','Noto_Sans_CJK_SC',sans-serif]">
      <div className="h-1 shrink-0 border-b-2 border-[#c8c8c8] bg-white" />
      <div className="flex min-h-0 flex-1">
        <Sidebar />
        <div className="relative flex min-w-0 flex-1 flex-col bg-[#f8f8f9]">
          <TopBar />
          <main className="flex min-h-0 flex-1 flex-col gap-[10px] overflow-hidden pt-[10px] pr-[13px] pl-[10px]">
            <SearchPanel />
            <section className={`grid shrink-0 grid-cols-4 gap-x-[27px] gap-y-[26px] px-[34px] pt-[45px] pb-8 ${PANEL}`}>
              {CARDS.map((card) => <Card key={card.id} card={card} />)}
            </section>
          </main>
          <div className="absolute top-7 right-0 h-[293px] w-px bg-[#b4b4b8]" />
        </div>
      </div>
    </div>
  );
}
